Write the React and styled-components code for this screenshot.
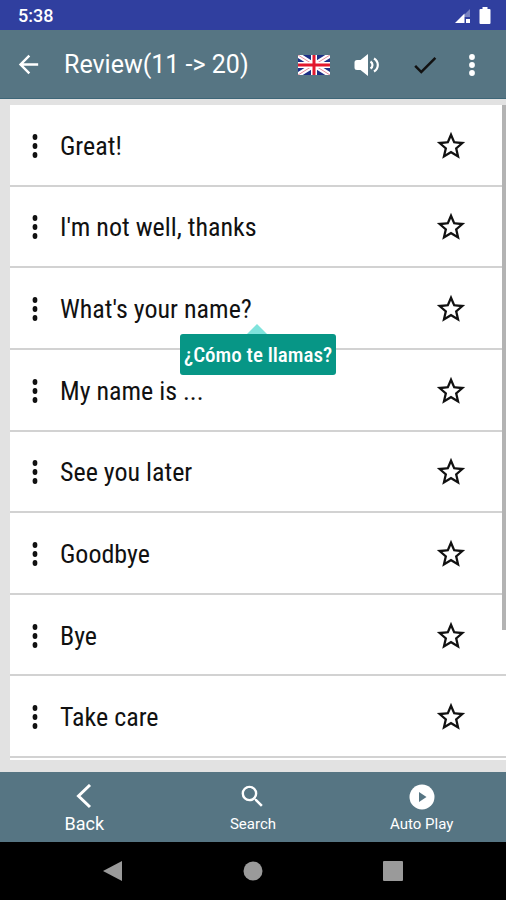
import React from 'react'
import styled, { createGlobalStyle } from 'styled-components'
import { MdArrowBack, MdCheck, MdSearch, MdStarBorder } from 'react-icons/md'


const GlobalStyle = createGlobalStyle`
* { box-sizing: border-box; }
body {
margin: 0;
font-family: Roboto, "Liberation Sans", sans-serif;
}
button {
display: flex;
align-items: center;
justify-content: center;
padding: 0;
border: none;
background: none;
color: inherit;
font-family: inherit;
cursor: pointer;
}
svg { display: block; flex-shrink: 0; }
`
const Screen = styled.div`
display: flex;
flex-direction: column;
min-height: 100vh;
background-color: #e2e2e2;
`
const StatusBar = styled.div`
display: flex;
align-items: center;
gap: 8px;
height: 30px;
padding: 2px 15px 0 18px;
background-color: #303f9f;
color: #fff;
`
const Clock = styled.time`
flex: 1;
font-size: 18px;
font-weight: 500;
line-height: 24px;
`
const AppBar = styled.header`
display: flex;
align-items: center;
height: 69px;
padding: 1px 16px 0 8px;
background-color: #567583;
border-bottom: 1px solid #3d6678;
color: #fff;
`
const Title = styled.h1`
flex: 1;
margin: 0 0 0 16px;
font-size: 25px;
font-weight: 400;
line-height: 32px;
white-space: nowrap;
`
const BarButton = styled.button`
width: ${props => props.$width}px;
height: 48px;
&& { color: ${props => props.$dark ? '#111' : '#fff'}; }
`
const Content = styled.main`
position: relative;
display: flex;
flex: 1;
padding: 6px 0 12px 10px;
`
const List = styled.ul`
display: flex;
flex: 1;
flex-direction: column;
margin: 0;
padding: 0 0 2px;
list-style: none;
background-color: #fff;
`
const Row = styled.li`
display: flex;
flex: 1;
align-items: center;
min-height: 72px;
padding: 2px 31px 0 0;
border-bottom: 2px solid #d2d2d2;
`
const RowMenu = styled.button`
width: 50px;
height: 48px;
`
const PhraseBox = styled.div`
position: relative;
flex: 1;
`
const Phrase = styled.span`
font-family: "Roboto Condensed", "Liberation Sans Narrow", Roboto, sans-serif;
font-size: 26px;
line-height: 32px;
color: #111;
`
const StarButton = styled.button`
width: 48px;
height: 48px;
`
const Tooltip = styled.div`
position: absolute;
z-index: 1;
top: 41px;
left: 120px;
padding: 7px 4px 5px;
border-radius: 3px;
background-color: #079686;
color: #fff;
font-family: "Roboto Condensed", "Liberation Sans Narrow", Roboto, sans-serif;
font-size: 21px;
font-weight: 500;
line-height: 29px;
white-space: nowrap;
&::before {
content: '';
position: absolute;
bottom: 100%;
left: 67px;
border: 10px solid transparent;
border-top: none;
border-bottom-color: #7fe3dc;
}
`
const ScrollThumb = styled.div`
position: absolute;
top: 6px;
right: 0;
width: 4px;
height: 78%;
background-color: #b3b3b3;
`
const BottomBar = styled.nav`
display: grid;
grid-template-columns: repeat(3, 1fr);
height: 70px;
padding-top: 5px;
background-color: #567583;
color: #fff;
`
const Tab = styled.button`
flex-direction: column;
font-size: ${props => props.$large ? 18 : 15}px;
line-height: 26px;
`
const TabIcon = styled.span`
display: flex;
align-items: center;
height: 28px;
`
const SystemNav = styled.div`
display: grid;
grid-template-columns: repeat(3, 1fr);
height: 58px;
padding: 0 8.5%;
background-color: #000;
color: #9a9a9a;
`

const phrases = [
  { text: 'Great!' },
  { text: "I'm not well, thanks" },
  { text: "What's your name?", translation: '¿Cómo te llamas?' },
  { text: 'My name is ...' },
  { text: 'See you later' },
  { text: 'Goodbye' },
  { text: 'Bye' },
  { text: 'Take care' },
]

function SignalIcon() {
  return (
    <svg width="16" height="16" viewBox="0 0 16 16" fill="#fff">
      <path d="M15 1v8H7z" opacity="0.35" />
      <path d="M0 15L9.500 5.500V15z" />
      <path d="M11 11h4v4h-4z" />
    </svg>
  )
}

function BatteryIcon() {
  return (
    <svg width="12" height="18" viewBox="0 0 12 18" fill="#fff">
      <path d="M3.500 0h5v2h2q1 0 1 1v13q0 1-1 1h-9q-1 0-1-1V3q0-1 1-1h2z" />
    </svg>
  )
}

function FlagIcon() {
  return (
    <svg width="32" height="20" viewBox="0 0 32 20">
      <path d="M0 0h32v20H0z" fill="#1d2f86" />
      <path d="M0 0l32 20M32 0L0 20" stroke="#fff" strokeWidth="5" />
      <path d="M0 0l32 20M32 0L0 20" stroke="#e88a98" strokeWidth="1" />
      <path d="M16 0v20M0 10h32" stroke="#fff" strokeWidth="6" />
      <path d="M16 0v20M0 10h32" stroke="#e3182d" strokeWidth="3" />
    </svg>
  )
}

function SpeakerIcon() {
  return (
    <svg width="26" height="24" viewBox="0 0 26 24" fill="none">
      <path d="M3 7h3.500L14 1v22l-7.500-6H3q-2.500 0-2.500-2.500v-5Q.5 7 3 7z" fill="#fff" />
      <path d="M16.500 8.500q2 1.300 2 3.500t-2 3.500" stroke="#fff" strokeWidth="2.200" />
      <path d="M20 5.500q3.800 2.300 3.800 6.500T20 18.500" stroke="#fff" strokeWidth="2.200" />
    </svg>
  )
}

function MoreIcon() {
  return (
    <svg width="8" height="24" viewBox="0 0 8 24" fill="currentColor">
      <circle cx="4" cy="4" r="2.900" />
      <circle cx="4" cy="12" r="2.900" />
      <circle cx="4" cy="20" r="2.900" />
    </svg>
  )
}

function DotsIcon() {
  return (
    <svg width="6" height="26" viewBox="0 0 6 26" fill="#111">
      <ellipse cx="3" cy="4" rx="2.400" ry="3" />
      <ellipse cx="3" cy="13" rx="2.400" ry="3" />
      <ellipse cx="3" cy="22" rx="2.400" ry="3" />
    </svg>
  )
}

function ChevronIcon() {
  return (
    <svg width="16" height="26" viewBox="0 0 16 26" fill="none" stroke="#fff" strokeWidth="3">
      <path d="M14 1L2.500 12 14 23" />
    </svg>
  )
}

function PlayIcon() {
  return (
    <svg width="26" height="26" viewBox="0 0 26 26">
      <circle cx="13" cy="13" r="12.500" fill="#fff" />
      <path d="M10 8l7.500 5-7.500 5z" fill="#567583" />
    </svg>
  )
}

function App() {
  return (
    <>
      <GlobalStyle />
      <Screen>

        <StatusBar>
          <Clock>5:38</Clock>
          <SignalIcon />
          <BatteryIcon />
        </StatusBar>

        <AppBar>
          <BarButton $width={40} aria-label="Back"><MdArrowBack size={29} /></BarButton>
          <Title>Review(11 -&gt; 20)</Title>
          <BarButton $width={48} aria-label="Language"><FlagIcon /></BarButton>
          <BarButton $width={58} aria-label="Sound"><SpeakerIcon /></BarButton>
          <BarButton $width={58} $dark aria-label="Done"><MdCheck size={30} /></BarButton>
          <BarButton $width={36} aria-label="More"><MoreIcon /></BarButton>
        </AppBar>

        <Content>
          <List>
            {phrases.map(phrase => (
              <Row key={phrase.text}>
                <RowMenu aria-label="Options"><DotsIcon /></RowMenu>
                <PhraseBox>
                  <Phrase>{phrase.text}</Phrase>
                  {phrase.translation && <Tooltip role="tooltip">{phrase.translation}</Tooltip>}
                </PhraseBox>
                <StarButton aria-label="Favorite"><MdStarBorder size={34} color="#111" /></StarButton>
              </Row>
            ))}
          </List>
          <ScrollThumb />
        </Content>

        <BottomBar>
          <Tab $large><TabIcon><ChevronIcon /></TabIcon>Back</Tab>
          <Tab><TabIcon><MdSearch size={29} /></TabIcon>Search</Tab>
          <Tab><TabIcon><PlayIcon /></TabIcon>Auto Play</Tab>
        </BottomBar>

        <SystemNav>
          <button aria-label="System back">
            <svg width="20" height="20" viewBox="0 0 20 20" fill="currentColor"><path d="M0 10L19 0v20z" /></svg>
          </button>
          <button aria-label="Home">
            <svg width="20" height="20" viewBox="0 0 20 20" fill="currentColor"><circle cx="10" cy="10" r="9.500" /></svg>
          </button>
          <button aria-label="Recent apps">
            <svg width="20" height="20" viewBox="0 0 20 20" fill="currentColor"><rect width="20" height="20" rx="1" /></svg>
          </button>
        </SystemNav>

      </Screen>
    </>
  )
}

export default App
